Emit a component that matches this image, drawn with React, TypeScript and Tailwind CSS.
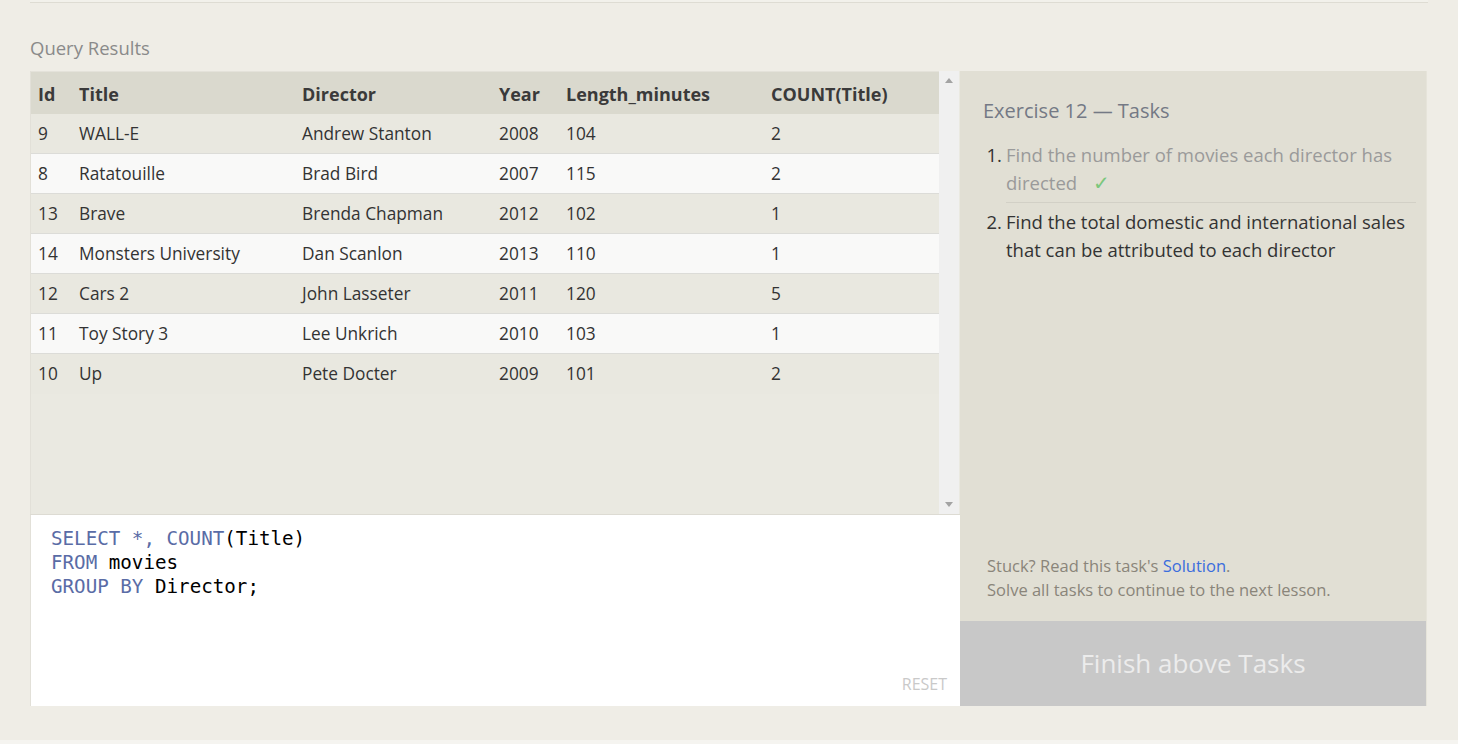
import React from 'react';

type Movie = {
  id: number;
  title: string;
  director: string;
  year: number;
  length: number;
  count: number;
};

const rows: Movie[] = [
  { id: 9, title: 'WALL-E', director: 'Andrew Stanton', year: 2008, length: 104, count: 2 },
  { id: 8, title: 'Ratatouille', director: 'Brad Bird', year: 2007, length: 115, count: 2 },
  { id: 13, title: 'Brave', director: 'Brenda Chapman', year: 2012, length: 102, count: 1 },
  { id: 14, title: 'Monsters University', director: 'Dan Scanlon', year: 2013, length: 110, count: 1 },
  { id: 12, title: 'Cars 2', director: 'John Lasseter', year: 2011, length: 120, count: 5 },
  { id: 11, title: 'Toy Story 3', director: 'Lee Unkrich', year: 2010, length: 103, count: 1 },
  { id: 10, title: 'Up', director: 'Pete Docter', year: 2009, length: 101, count: 2 },
];

const headers = ['Id', 'Title', 'Director', 'Year', 'Length_minutes', 'COUNT(Title)'];

const cols = 'grid grid-cols-[41px_223px_197px_67px_205px_1fr]';

export default function App() {
  return (
    <div
      className="min-h-screen bg-[#f5f4f0]"
      style={{ fontFamily: '"Open Sans", "Noto Sans", sans-serif' }}
    >
      <div className="h-[740px] bg-[#efede6]">
        {/* tail of the previous table */}
        <div className="mx-[30px] h-[3px] w-[1398px] border-b border-[#dedcd3] bg-[#f2f1eb]" />

        <div className="px-[30px] pt-[33px] text-[18.5px] leading-[24px] text-[#8a8a8a]">
          Query Results
        </div>

        <div className="mx-[30px] mt-[11px] flex h-[635px] w-[1397px]">
          {/* Left: results + editor */}
          <div className="flex w-[930px] flex-col">
            <div className="flex h-[444px] border-b border-[#dddbd3] bg-[#eae9e1]">
              <div className="flex-1 border-l border-[#e2e0d8] text-[#333]">
                <div className={`${cols} h-[43px] items-center border-t border-[#e4e2da] bg-[#dad9ce] pt-[3px] text-[18px] font-bold text-[#3a3a3a]`}>
                  {headers.map(h => (
                    <div key={h} className="pl-[7px]">{h}</div>
                  ))}
                </div>
                {rows.map((r, i) => (
                  <div
                    key={r.id}
                    className={`${cols} h-[40px] items-center border-b border-[#dcdcd8] text-[17.3px] ${i % 2 === 0 ? 'bg-[#e9e8e0]' : 'bg-[#f9f9f8]'} ${i === rows.length - 1 ? 'border-b-0' : ''}`}
                  >
                    <div className="pl-[7px]">{r.id}</div>
                    <div className="pl-[7px]">{r.title}</div>
                    <div className="pl-[7px]">{r.director}</div>
                    <div className="pl-[7px]">{r.year}</div>
                    <div className="pl-[7px]">{r.length}</div>
                    <div className="pl-[7px]">{r.count}</div>
                  </div>
                ))}
              </div>
              {/* scrollbar */}
              <div className="flex w-[20px] flex-col items-center justify-between bg-[#f0f0f0] py-[7px]">
                <div className="h-0 w-0 border-x-[4px] border-b-[5px] border-x-transparent border-b-[#a3a3a3]" />
                <div className="h-0 w-0 border-x-[4px] border-t-[5px] border-x-transparent border-t-[#a3a3a3]" />
              </div>
              <div className="w-[1px] bg-[#eae9e1]" />
            </div>

            <div className="relative flex-1 border-l border-[#e2e0d8] bg-white pl-[20px] pt-[12px]">
              <pre
                className="text-[19.2px] leading-[24px] text-black"
                style={{ fontFamily: '"DejaVu Sans Mono", "Liberation Mono", monospace' }}
              >
                <span className="text-[#5a6ca6]">SELECT *, COUNT</span>(Title){'\n'}
                <span className="text-[#5a6ca6]">FROM</span> movies{'\n'}
                <span className="text-[#5a6ca6]">GROUP BY</span> Director;
              </pre>
              <div className="absolute bottom-[10px] right-[13px] text-[16px] text-[#c9c9c9]">RESET</div>
            </div>
          </div>

          {/* Right: tasks */}
          <div className="flex w-[467px] flex-col border-r border-[#e6e4da] bg-[#e1dfd4]">
            <div className="flex-1 pl-[23px] pr-[10px] pt-[26px]">
              <div className="text-[20px] leading-[28px] text-[#747985]">Exercise 12 — Tasks</div>
              <ol className="mt-[16px] text-[18.5px] leading-[28px]">
                <li className="flex text-[#9a9a9a]">
                  <span className="w-[23px] shrink-0 pr-[4px] text-right text-[#333]">1.</span>
                  <span className="flex-1 border-b border-[#d2d0c6] pb-[5px]">
                    Find the number of movies each director has directed
                    <span
                      className="ml-[16px] inline-block align-baseline text-[20px] leading-[20px] text-[#7cc77c]"
                      style={{ fontFamily: '"DejaVu Sans", sans-serif' }}
                    >
                      ✓
                    </span>
                  </span>
                </li>
                <li className="mt-[5px] flex text-[#333]">
                  <span className="w-[23px] shrink-0 pr-[4px] text-right">2.</span>
                  <span className="flex-1">
                    Find the total domestic and international sales that can be attributed to each director
                  </span>
                </li>
              </ol>
            </div>
            <div className="pb-[19px] pl-[27px] text-[16.5px] leading-[24px] text-[#8a857a]">
              <div>
                Stuck? Read this task's <span className="text-[#3b6ddd]">Solution</span>.
              </div>
              <div>Solve all tasks to continue to the next lesson.</div>
            </div>
            <div className="flex h-[85px] items-center justify-center bg-[#c8c8c8] text-[26px] text-[#ececec]">
              Finish above Tasks
            </div>
          </div>
        </div>
      </div>
    </div>
  );
}
